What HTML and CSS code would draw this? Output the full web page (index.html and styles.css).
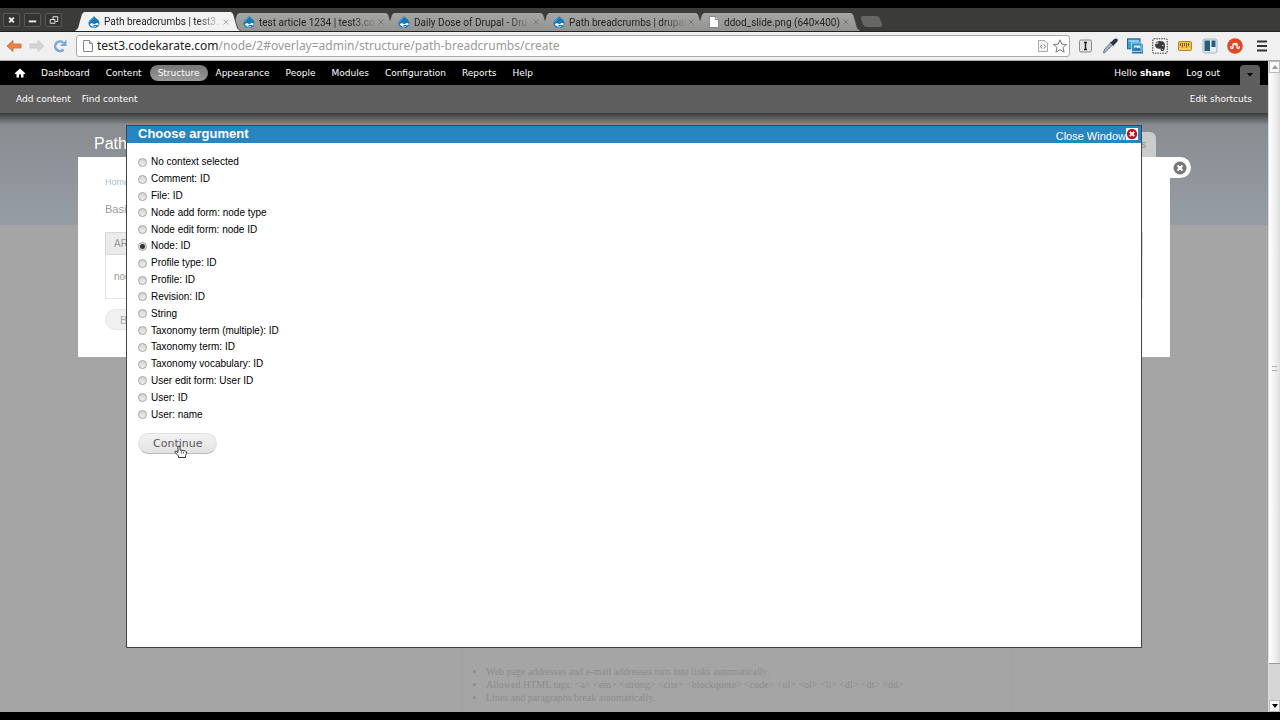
FILE: index.html
```html
<!DOCTYPE html>
<html lang="en">
<head>
    <meta charset="UTF-8">
    <meta name="viewport" content="width=device-width, initial-scale=1.0">
    <title>Path breadcrumbs | test3.codekarate.com</title>
    <link rel="stylesheet" href="styles.css">
</head>
<body>
    <!-- shared drawings -->
    <svg class="defs" aria-hidden="true">
        <symbol id="drop" viewBox="0 0 12 12">
            <path d="M6 0C7 2 11.500 3.500 11.500 7.200C11.500 10 9 12 6 12C3 12 .5 10 .5 7.200C.5 3.500 4.500 2.500 6 0Z" fill="#1579bd"/>
            <path d="M2 8.500C3.500 6.300 5 7.800 6.200 8.300C7.500 7.300 10 6 10.600 8C10.500 10.300 8.500 9 7 8.800C5.500 9.500 3 11 2 8.500Z" fill="#fff"/>
            <path d="M4 10.600Q6 11.600 8 10.400" stroke="#fff" fill="none" stroke-width=".8"/>
            <path d="M5.500 1.500C4 3 2 4 1.700 6" stroke="#6bb8e6" fill="none"/>
        </symbol>
        <symbol id="page" viewBox="0 0 10 12">
            <path d="M.5 .5H6.500L9.500 3.500V11.500H.5Z" fill="#fff" stroke="#888"/>
            <path d="M6.500 .5V3.500H9.500" fill="#ddd" stroke="#888"/>
        </symbol>
    </svg>

    <div class="browser">
        <div class="tab-strip">
            <div class="window-buttons">
                <button aria-label="Close"><svg viewBox="0 0 16 12"><path d="M5.500 3.500L10.500 8.500M10.500 3.500L5.500 8.500"/></svg></button>
                <button aria-label="Minimize"><svg viewBox="0 0 16 12"><path d="M4 7.500H12"/></svg></button>
                <button aria-label="Restore"><svg viewBox="0 0 16 12"><path class="thin" d="M4.500 5.500H9.500V9.500H4.500ZM7.500 5V2.500H12.500V7.500H10"/></svg></button>
            </div>
            <div class="tabs">
                <div class="tab-wrap"><div class="tab active"><svg class="drop"><use href="#drop"/></svg><span>Path breadcrumbs | test3.</span><button aria-label="Close tab"><svg viewBox="0 0 6 6"><path d="M.5 .5L5.500 5.500M5.500 .5L.5 5.500"/></svg></button></div></div>
                <div class="tab-wrap"><div class="tab"><svg class="drop"><use href="#drop"/></svg><span>test article 1234 | test3.co</span><button aria-label="Close tab"><svg viewBox="0 0 6 6"><path d="M.5 .5L5.500 5.500M5.500 .5L.5 5.500"/></svg></button></div></div>
                <div class="tab-wrap"><div class="tab"><svg class="drop"><use href="#drop"/></svg><span>Daily Dose of Drupal - Dru</span><button aria-label="Close tab"><svg viewBox="0 0 6 6"><path d="M.5 .5L5.500 5.500M5.500 .5L.5 5.500"/></svg></button></div></div>
                <div class="tab-wrap"><div class="tab"><svg class="drop"><use href="#drop"/></svg><span>Path breadcrumbs | drupal</span><button aria-label="Close tab"><svg viewBox="0 0 6 6"><path d="M.5 .5L5.500 5.500M5.500 .5L.5 5.500"/></svg></button></div></div>
                <div class="tab-wrap"><div class="tab"><svg class="drop"><use href="#page"/></svg><span class="full">ddod_slide.png (640×400)</span><button aria-label="Close tab"><svg viewBox="0 0 6 6"><path d="M.5 .5L5.500 5.500M5.500 .5L.5 5.500"/></svg></button></div></div>
                <button class="new-tab" aria-label="New tab"></button>
            </div>
        </div>

        <div class="address-row">
            <div class="nav-buttons">
                <button aria-label="Back"><svg viewBox="0 0 16 14"><path d="M7 1.500L1 7L7 12.500V9H15V5H7Z" fill="#ee8244" stroke="#bd6a3c" stroke-width=".8"/></svg></button>
                <button aria-label="Forward"><svg viewBox="0 0 16 14"><path d="M9 1.500L15 7L9 12.500V9H1V5H9Z" fill="#d4d4d4" stroke="#c8c8c8" stroke-width=".8"/></svg></button>
                <button aria-label="Reload"><svg viewBox="0 0 16 14"><path d="M11.500 10.500A4.800 4.800 0 1 1 11 3.500" fill="none" stroke="#7ea6d6" stroke-width="2.600"/><path d="M14.500 .5V7H8Z" fill="#7ea6d6"/></svg></button>
            </div>
            <div class="address">
                <svg class="page-icon"><use href="#page"/></svg>
                <div class="url"><b>test3.codekarate.com</b>/node/2#overlay=admin/structure/path-breadcrumbs/create</div>
                <svg class="code-icon" viewBox="0 0 10 12"><path d="M.5 .5H7L9.500 3V11.500H.5Z" fill="#f6f6f6" stroke="#aaa"/><path d="M4 4.500L2.500 6.500L4 8.500M6 4.500L7.500 6.500L6 8.500" fill="none" stroke="#777"/></svg>
                <svg class="star" viewBox="0 0 14 14"><path d="M7 .8L8.800 5.200L13.500 5.500L9.900 8.500L11.100 13.200L7 10.600L2.900 13.200L4.100 8.500L.5 5.500L5.200 5.200Z" fill="#fff" stroke="#777"/></svg>
            </div>
            <div class="extensions">
                <svg viewBox="0 0 16 16"><rect x="2.500" y="2" width="12" height="12" rx="1.500" fill="#e4e4e4" stroke="#888"/><path d="M7 4.500H10M7 11.500H10M8.500 4.500V11.500" stroke="#222" stroke-width="1.500"/></svg>
                <svg viewBox="0 0 16 16"><path d="M1.500 15Q1.500 12 4 9.500L9 4.500L11 6.500L6.500 11Q4 13 2.500 15Z" fill="#9db2c6" stroke="#55697d" stroke-width=".8"/><path d="M8.500 4L12 7.500M10 4.500L12 2Q14 .5 15 1.500Q15.500 3 14 4L11.500 6.500Z" fill="#273544" stroke="#273544" stroke-width="1.300"/></svg>
                <svg viewBox="0 0 16 16"><rect x="5" y="6" width="11" height="9.500" fill="#2376ab"/><rect x=".5" y=".8" width="12.500" height="10" fill="#3d9fd0" stroke="#1c6d9e"/><path d="M1.500 2H12V4H1.500Z" fill="#8dcdec"/><rect x="4.500" y="5" width="10.500" height="8.500" fill="#2c8ec6" stroke="#fff" stroke-width=".6"/><path d="M7 7.500H13.500V12H7Z" fill="#d4eefa"/><path d="M7 12V10.500L9 9L10.500 10.500L12 9.500L13.500 11V12Z" fill="#2c7096"/></svg>
                <svg viewBox="0 0 16 16"><rect x=".8" y=".8" width="14.400" height="14.400" rx="1" fill="#f4f4f4" stroke="#333" stroke-dasharray="1.500 1"/><path d="M3 5.500L5.500 3Q10 2.500 12 4Q14 8 12 12.500Q9 14.500 8.500 11L9 10.500Q5 11.500 3.500 9Z" fill="#3c3c3c"/><path d="M3 5.500H5.800V3M10 7.500H11.500M10 11.500H11" fill="none" stroke="#ddd" stroke-width=".9"/></svg>
                <svg viewBox="0 0 16 16"><rect x="1.500" y="3.500" width="13" height="9" rx="1" fill="#f4bd3e" stroke="#b98520"/><path d="M3.500 5V8M5.500 5V9.500M7.500 5V8M9.500 5V9.500M11.500 5V8" stroke="#80601a"/><path d="M2.500 11H13.500" stroke="#fbdc8c"/></svg>
                <svg viewBox="0 0 16 16"><rect x="1" y="1" width="14" height="14" rx="2" fill="#e5edf2" stroke="#a0b6c4"/><rect x="2.500" y="2.500" width="5.500" height="10.500" fill="#285c80"/><rect x="9.500" y="2.500" width="4" height="6.500" fill="#285c80"/></svg>
                <svg viewBox="0 0 16 16"><circle cx="8" cy="8" r="7.800" fill="#e34624"/><path d="M3.800 8V9.300Q3.800 10.600 4.900 10.600T6 9.500V6.800Q6.200 5.500 7.100 5.500T8.200 6.800M8.200 7.500V6.800Q8.300 5.500 9.200 5.500T10.100 6.800V9.500Q10.200 10.600 11.200 10.600T12.300 9.300V8" fill="none" stroke="#fff" stroke-width="1.400"/></svg>
                <svg class="menu" viewBox="0 0 16 16"><path d="M3 3.500H13M3 8H13M3 12.500H13" stroke="#333" stroke-width="2"/></svg>
            </div>
        </div>
    </div>

    <div class="viewport">
        <div class="site">
            <nav class="toolbar">
                <a href="#" class="home" aria-label="Home"><svg viewBox="0 0 10 10"><path d="M0 5L5 .5L10 5V6H8.500V9.500H6V6.500H4V9.500H1.500V6H0Z" fill="#fff"/></svg></a>
                <a href="#">Dashboard</a>
                <a href="#">Content</a>
                <a href="#" class="current">Structure</a>
                <a href="#">Appearance</a>
                <a href="#">People</a>
                <a href="#">Modules</a>
                <a href="#">Configuration</a>
                <a href="#">Reports</a>
                <a href="#">Help</a>
                <a href="#" class="user">Hello <strong>shane</strong></a>
                <a href="#">Log out</a>
                <button class="drawer" aria-label="Hide shortcuts"><svg viewBox="0 0 6 4"><path d="M0 0H6L3 3.500Z"/></svg></button>
            </nav>
            <div class="shortcuts">
                <a href="#">Add content</a>
                <a href="#">Find content</a>
                <a href="#" class="edit">Edit shortcuts</a>
            </div>

            <div class="page">
                <div class="overlay">
                    <div class="overlay-head">
                        <h1>Path</h1>
                        <a href="#" class="overlay-tab">Paths</a>
                    </div>
                    <div class="overlay-body">
                        <a href="#" class="crumb">Home</a>
                        <p>Basic</p>
                        <table>
                            <thead><tr><th>ARG</th></tr></thead>
                            <tbody><tr><td>node</td></tr></tbody>
                        </table>
                        <button class="pill back">Back</button>
                        <button class="overlay-close" aria-label="Close overlay"><svg viewBox="0 0 14 14"><circle cx="7" cy="7" r="6.500" fill="#777"/><path d="M4.500 4.500L9.500 9.500M9.500 4.500L4.500 9.500" stroke="#fff" stroke-width="2"/></svg></button>
                    </div>
                </div>

                <ul class="tips">
                    <li>Web page addresses and e-mail addresses turn into links automatically.</li>
                    <li>Allowed HTML tags: &lt;a&gt; &lt;em&gt; &lt;strong&gt; &lt;cite&gt; &lt;blockquote&gt; &lt;code&gt; &lt;ul&gt; &lt;ol&gt; &lt;li&gt; &lt;dl&gt; &lt;dt&gt; &lt;dd&gt;</li>
                    <li>Lines and paragraphs break automatically.</li>
                </ul>

                <div class="modal" role="dialog" aria-labelledby="modal-title">
                    <div class="modal-header">
                        <h2 id="modal-title">Choose argument</h2>
                        <a href="#">Close Window<svg viewBox="0 0 12 12"><path d="M0 0H12V12H0Z" fill="#fff"/><circle cx="6" cy="6" r="5.200" fill="#b3182a"/><path d="M3.800 3.800L8.200 8.200M8.200 3.800L3.800 8.200" stroke="#fff" stroke-width="1.800"/></svg></a>
                    </div>
                    <form class="modal-body">
                        <div class="options">
                            <label><input type="radio" name="argument">No context selected</label>
                            <label><input type="radio" name="argument">Comment: ID</label>
                            <label><input type="radio" name="argument">File: ID</label>
                            <label><input type="radio" name="argument">Node add form: node type</label>
                            <label><input type="radio" name="argument">Node edit form: node ID</label>
                            <label><input type="radio" name="argument" checked>Node: ID</label>
                            <label><input type="radio" name="argument">Profile type: ID</label>
                            <label><input type="radio" name="argument">Profile: ID</label>
                            <label><input type="radio" name="argument">Revision: ID</label>
                            <label><input type="radio" name="argument">String</label>
                            <label><input type="radio" name="argument">Taxonomy term (multiple): ID</label>
                            <label><input type="radio" name="argument">Taxonomy term: ID</label>
                            <label><input type="radio" name="argument">Taxonomy vocabulary: ID</label>
                            <label><input type="radio" name="argument">User edit form: User ID</label>
                            <label><input type="radio" name="argument">User: ID</label>
                            <label><input type="radio" name="argument">User: name</label>
                        </div>
                        <button type="button" class="pill continue">Continue<svg class="pointer" viewBox="0 0 14 14"><path d="M4 1.500Q5 .5 6 1.500V5L11.500 6Q13 6.500 12.500 8.500L11.500 10.500V12.500H4.500V11L1 7.500Q.5 6 2 6L4 7.500Z" fill="#fff" stroke="#333"/><path d="M7.500 6.500V8.500M9.500 7V8.500" stroke="#333" stroke-width=".8"/></svg></button>
                    </form>
                </div>
            </div>
        </div>

        <div class="scrollbar">
            <div class="arrow"><svg viewBox="0 0 6 4"><path d="M0 4H6L3 0Z" fill="#999"/></svg></div>
            <div class="thumb"><i></i></div>
            <div class="arrow"><svg viewBox="0 0 6 4"><path d="M0 0H6L3 4Z"/></svg></div>
        </div>
    </div>
</body>
</html>
```
FILE: styles.css
```css
* {
    box-sizing: border-box;
}

body {
    margin: 0;
    padding: 8px 0;
    height: 100vh;
    overflow: hidden;
    display: flex;
    flex-direction: column;
    background: #000;
    font-family: "Liberation Sans", Arial, sans-serif;
    font-size: 10px;
}

button {
    margin: 0;
    padding: 0;
    border: none;
    background: none;
    font-family: inherit;
}

a {
    text-decoration: none;
}

svg {
    display: block;
    flex: none;
}

.defs {
    position: absolute;
    width: 0;
    height: 0;
}

/* browser window */
.tab-strip {
    display: flex;
    height: 24px;
    background: #3b3b39;
    border-bottom: 1px solid #222;
}

.window-buttons {
    display: flex;
    gap: 4px;
    padding: 5px 13px 0 3px;
}

.window-buttons button {
    width: 17px;
    height: 14px;
    border: 1px solid #5a5a58;
    border-radius: 2px;
    background: #333331;
}

.window-buttons svg {
    width: 15px;
    height: 12px;
    fill: none;
    stroke: #eee;
    stroke-width: 2;
}

.window-buttons .thin {
    stroke-width: 1;
}

.tabs {
    display: flex;
    align-items: flex-end;
}

.tab-wrap {
    margin-right: -10px;
    filter: drop-shadow(1px 0 0 #484848);
}

.tab-wrap:first-child {
    position: relative;
    z-index: 1;
}

.tab {
    display: flex;
    align-items: center;
    width: 165px;
    height: 18px;
    padding: 0 11px 0 13px;
    background: linear-gradient(#a6a6a4, #929290);
    clip-path: polygon(0 100%, 3px 85%, 7px 10%, 9px 0, calc(100% - 9px) 0, calc(100% - 7px) 10%, calc(100% - 3px) 85%, 100% 100%);
    color: #222;
}

.tab.active {
    height: 19px;
    background: #f2f2f2;
}

.tab .drop {
    width: 12px;
    height: 12px;
    margin-right: 4px;
}

.tab span {
    flex: 1;
    overflow: hidden;
    white-space: nowrap;
    font-family: Roboto, sans-serif;
    font-size: 10px;
    -webkit-mask-image: linear-gradient(to right, #000 78%, transparent);
    mask-image: linear-gradient(to right, #000 78%, transparent);
}

.tab .full {
    -webkit-mask-image: none;
    mask-image: none;
}

.tab button svg {
    width: 6px;
    height: 6px;
    stroke: #777;
}

.tab.active button svg {
    stroke: #aaa;
}

.new-tab {
    width: 19px;
    height: 11px;
    margin: 0 0 4px 12px;
    background: #666664;
    border-radius: 3px;
    transform: skewX(20deg);
}

.address-row {
    display: flex;
    align-items: center;
    height: 29px;
    padding: 0 10px 0 6px;
    background: #f0f0f0;
    border-bottom: 1px solid #aaa;
}

.nav-buttons {
    display: flex;
    gap: 7px;
}

.nav-buttons svg {
    width: 16px;
    height: 14px;
}

.address {
    flex: 1;
    display: flex;
    align-items: center;
    height: 22px;
    margin-left: 8px;
    padding: 0 2px 0 6px;
    background: #fff;
    border: 1px solid #aaa;
    border-radius: 3px;
}

.page-icon {
    width: 10px;
    height: 12px;
}

.url {
    flex: 1;
    margin-left: 4px;
    color: #999;
    font-family: "Noto Sans", sans-serif;
    font-size: 12px;
    line-height: 18px;
    white-space: nowrap;
}

.url b {
    color: #222;
    font-weight: normal;
}

.code-icon {
    width: 10px;
    height: 12px;
    margin-right: 5px;
}

.star {
    width: 14px;
    height: 14px;
}

.extensions {
    display: flex;
    gap: 9px;
    margin-left: 7px;
}

.extensions svg {
    width: 16px;
    height: 16px;
}

.extensions .menu {
    margin-left: 2px;
}

/* page area */
.viewport {
    flex: 1;
    min-height: 0;
    display: flex;
}

.site {
    flex: 1;
    display: flex;
    flex-direction: column;
}

.toolbar {
    display: flex;
    align-items: center;
    height: 24px;
    padding: 0 8px 0 7px;
    background: #000;
    font-family: "DejaVu Sans", sans-serif;
    font-size: 9px;
}

.toolbar a {
    padding: 0 8px;
    line-height: 16px;
    color: #fff;
}

.toolbar .home svg {
    width: 10px;
    height: 10px;
}

.toolbar .current {
    background: linear-gradient(#777, #999);
    border-radius: 8px;
}

.toolbar .user {
    margin-left: auto;
}

.drawer {
    display: flex;
    align-items: center;
    justify-content: center;
    align-self: flex-end;
    width: 20px;
    height: 20px;
    margin-left: 12px;
    background: #5e5e5e;
    border-radius: 4px 4px 0 0;
}

.drawer svg {
    width: 6px;
    height: 4px;
}

.shortcuts {
    display: flex;
    align-items: center;
    gap: 11px;
    height: 28px;
    padding: 0 16px;
    background: #5e5e5e;
    font-family: "DejaVu Sans", sans-serif;
    font-size: 9px;
}

.shortcuts a {
    color: #fff;
}

.shortcuts .edit {
    margin-left: auto;
}

.page {
    position: relative;
    flex: 1;
    display: flex;
    flex-direction: column;
    justify-content: space-between;
    background:
        linear-gradient(#3c3c3c, rgba(60, 60, 60, 0)) 0 0 / 100% 12px no-repeat,
        linear-gradient(#878b8f, #969da4) 0 0 / 100% 112px no-repeat,
        #a5a5a5;
}

.overlay {
    margin: 18px 98px 0 78px;
}

.overlay-head {
    display: flex;
    justify-content: space-between;
    align-items: flex-end;
    height: 26px;
    padding: 0 14px 0 16px;
}

.overlay-head h1 {
    margin: 0;
    color: #fff;
    font-size: 16px;
    font-weight: normal;
    line-height: 26px;
}

.overlay-tab {
    padding: 0 10px;
    background: #ccc;
    border-radius: 6px 6px 0 0;
    color: #888;
    line-height: 25px;
}

.overlay-body {
    position: relative;
    padding: 19px 27px 27px;
    background: #fff;
    color: #999;
}

.crumb {
    display: block;
    color: #9fc0d8;
    font-size: 9px;
    line-height: 12px;
}

.overlay-body p {
    margin: 14px 0 15px;
    font-size: 11px;
    line-height: 15px;
}

.overlay-body table {
    width: 100%;
    margin-bottom: 10px;
    border-collapse: collapse;
    font-size: 10px;
    text-align: left;
}

.overlay-body th {
    height: 22px;
    padding: 0 8px;
    background: #ebebeb;
    border: 1px solid #d8d8d8;
    font-weight: normal;
}

.overlay-body td {
    height: 44px;
    padding: 0 8px;
    border: 1px solid #e4e4e4;
}

.pill {
    display: block;
    height: 21px;
    padding: 0 14px;
    background: linear-gradient(#f2f2f2, #e2e2e2);
    border: 1px solid #e0e0e0;
    border-bottom-color: #bbb;
    border-radius: 11px;
    color: #5a5a5a;
    font-size: 11px;
}

.pill.back {
    background: #f0f0f0;
    border-color: #e4e4e4;
    color: #aaa;
}

.overlay-close {
    position: absolute;
    top: 0;
    right: -21px;
    width: 21px;
    height: 21px;
    background: #fff;
    border-radius: 0 11px 11px 0;
}

.overlay-close svg {
    width: 14px;
    height: 14px;
    margin-left: 3px;
}

.tips {
    margin: 0 256px 0 461px;
    padding: 17px 0 8px 24px;
    border: solid #a1a1a1;
    border-width: 0 1px;
    color: #8c8c8c;
    font-family: "Liberation Serif", serif;
    font-size: 10px;
    line-height: 13px;
}

/* argument dialog */
.modal {
    position: absolute;
    inset: 12px 126px 64px;
    background: #fff;
    border: 1px solid #444;
}

.modal-header {
    display: flex;
    justify-content: space-between;
    height: 17px;
    padding: 0 3px 0 11px;
    background: #2786bf;
    color: #fff;
}

.modal-header h2 {
    margin: 0;
    font-size: 13px;
    line-height: 16px;
}

.modal-header a {
    display: flex;
    color: #fff;
    font-size: 11px;
    line-height: 20px;
}

.modal-header svg {
    width: 12px;
    height: 12px;
    margin-top: 2px;
}

.modal-body {
    padding: 11px;
}

.options {
    display: grid;
    min-height: 269px;
    margin-bottom: 10px;
}

.options label {
    display: flex;
    align-items: center;
    gap: 4px;
    color: #000;
    line-height: 16px;
}

.options input {
    appearance: none;
    width: 9px;
    height: 9px;
    margin: 0;
    background: linear-gradient(#d4d4d4, #eee);
    border: 1px solid #a4a4a4;
    border-radius: 50%;
}

.options input:checked {
    background: radial-gradient(circle, #333 2px, #ddd 3px);
}

.continue {
    position: relative;
    font-family: "DejaVu Sans", sans-serif;
}

.pointer {
    position: absolute;
    top: 11px;
    left: 35px;
    width: 14px;
    height: 14px;
}

/* scrollbar */
.scrollbar {
    display: flex;
    flex-direction: column;
    width: 12px;
    background: #d6d6d6;
    border-left: 1px solid #ddd;
}

.arrow {
    display: flex;
    align-items: center;
    justify-content: center;
    height: 12px;
    background: #f8f8f8;
    border: 1px solid #bbb;
}

.arrow svg {
    width: 6px;
    height: 4px;
}

.thumb {
    flex: 1;
    display: flex;
    align-items: center;
    justify-content: center;
    margin-bottom: 36px;
    background: linear-gradient(to right, #fff, #eee 60%, #ddd);
    border-bottom: 1px solid #999;
}

.thumb i {
    width: 5px;
    height: 5px;
    border: solid #aaa;
    border-width: 1px 0;
}
```
